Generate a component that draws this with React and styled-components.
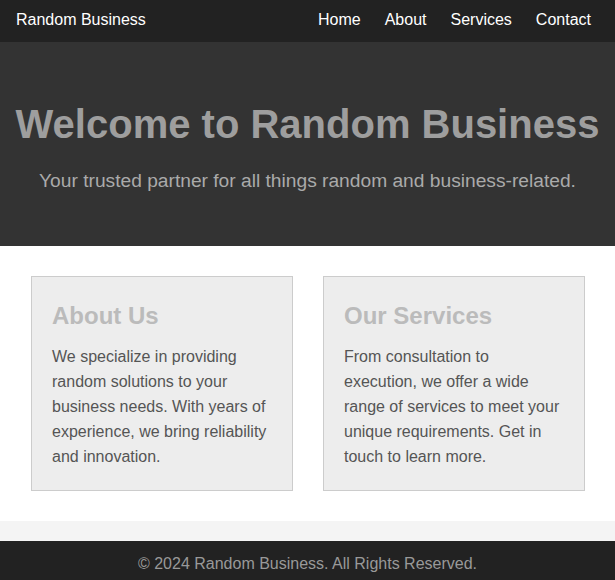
import React from "react";
import styled, { createGlobalStyle } from "styled-components";

const Global = createGlobalStyle`
  html, body { margin: 0; padding: 0; }
  body {
    background: #f4f4f4;
    font-family: "Liberation Sans", Arial, sans-serif;
    line-height: 1.6;
    color: #333;
  }
`;

const Header = styled.header`
  background: #222;
  color: #fff;
  height: 42px;
  box-sizing: border-box;
  padding: 7px 24px 9px 16px;
  display: flex;
  align-items: center;
  justify-content: space-between;
`;

const Logo = styled.div`
  font-size: 16px;
`;

const Nav = styled.nav`
  display: flex;
  gap: 24px;
`;

const NavLink = styled.a`
  color: #fff;
  text-decoration: none;
  font-size: 16px;
`;

const Hero = styled.section`
  background: #333;
  padding: 50px 10px;
  text-align: center;
`;

const Title = styled.h1`
  margin: 0;
  font-size: 40px;
  font-weight: bold;
  color: #9e9e9e;
`;

const Subtitle = styled.p`
  margin: 10px 0 0;
  font-size: 19.2px;
  line-height: 30px;
  color: #aaa;
`;

const Main = styled.main`
  background: #fff;
  padding: 30px 30px 30px 31px;
  margin-bottom: 20px;
  display: flex;
  gap: 30px;
`;

const Card = styled.div`
  flex: 1;
  background: #ededed;
  border: 1px solid #ccc;
  padding: 20px 20px 21px;
`;

const CardTitle = styled.h2`
  margin: 0 0 9px;
  font-size: 24px;
  color: #bbb;
`;

const CardText = styled.p`
  margin: 0;
  font-size: 16px;
  line-height: 25px;
  color: #555;
`;

const Footer = styled.footer`
  background: #222;
  color: #999;
  text-align: center;
  padding: 10px;
  font-size: 16px;
`;

export default function App() {
  return (
    <>
      <Global />
      <Header>
        <Logo>Random Business</Logo>
        <Nav>
          <NavLink href="#">Home</NavLink>
          <NavLink href="#">About</NavLink>
          <NavLink href="#">Services</NavLink>
          <NavLink href="#">Contact</NavLink>
        </Nav>
      </Header>
      <Hero>
        <Title>Welcome to Random Business</Title>
        <Subtitle>Your trusted partner for all things random and business-related.</Subtitle>
      </Hero>
      <Main>
        <Card>
          <CardTitle>About Us</CardTitle>
          <CardText>
            We specialize in providing random solutions to your business needs. With years of experience, we bring reliability and innovation.
          </CardText>
        </Card>
        <Card>
          <CardTitle>Our Services</CardTitle>
          <CardText>
            From consultation to execution, we offer a wide range of services to meet your unique requirements. Get in touch to learn more.
          </CardText>
        </Card>
      </Main>
      <Footer>© 2024 Random Business. All Rights Reserved.</Footer>
    </>
  );
}
